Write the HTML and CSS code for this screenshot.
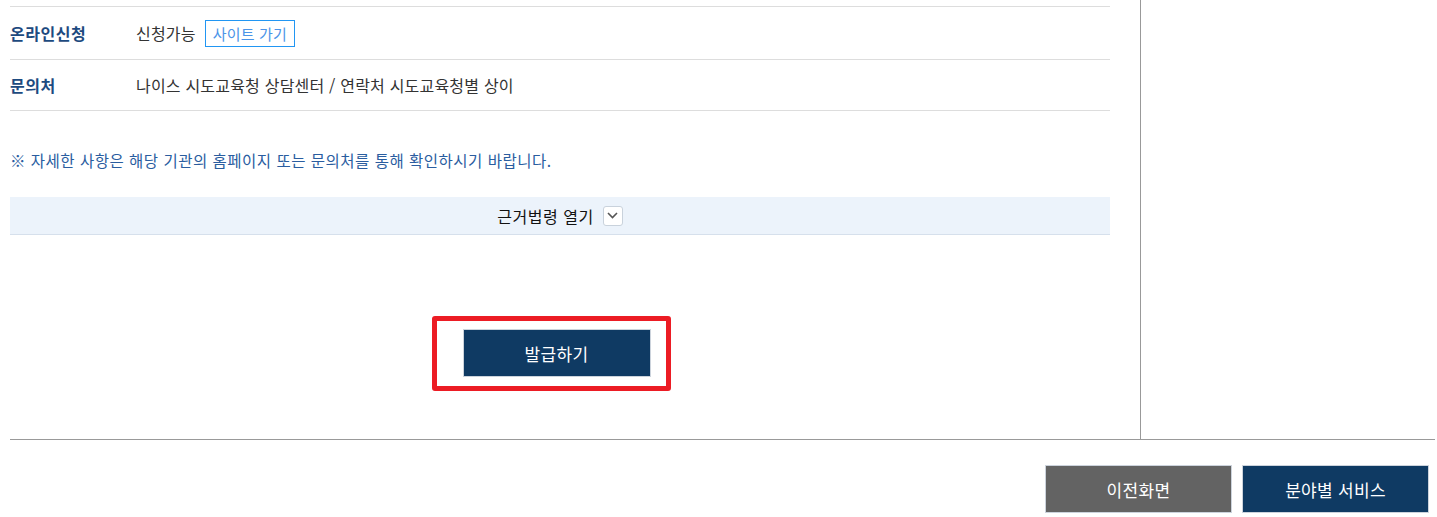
FILE: index.html
```html
<!DOCTYPE html>
<html lang="ko">
<head>
    <meta charset="UTF-8">
    <meta name="viewport" content="width=device-width, initial-scale=1.0">
    <title>발급하기</title>
    <link rel="stylesheet" href="styles.css">
</head>
<body>
    <div class="page">
        <div class="content-wrap">
            <div class="main">
                <div class="info-table">
                    <div class="info-row row-tall">
                        <div class="info-label">온라인신청</div>
                        <div class="info-value">
                            신청가능
                            <a class="site-link" href="#">사이트 가기</a>
                        </div>
                    </div>
                    <div class="info-row">
                        <div class="info-label">문의처</div>
                        <div class="info-value">나이스 시도교육청 상담센터 / 연락처 시도교육청별 상이</div>
                    </div>
                </div>

                <p class="notice">※ 자세한 사항은 해당 기관의 홈페이지 또는 문의처를 통해 확인하시기 바랍니다.</p>

                <div class="law-bar">
                    <span>근거법령 열기</span>
                    <button class="law-toggle" type="button">
                        <svg width="11" height="7" viewBox="0 0 11 7"><path d="M1 1l4.5 4.5L10 1" fill="none" stroke="#555" stroke-width="1.6"/></svg>
                    </button>
                </div>

                <div class="issue-area">
                    <div class="issue-wrap">
                        <button class="btn btn-navy btn-issue" type="button">발급하기</button>
                        <span class="highlight"></span>
                    </div>
                </div>
            </div>
            <div class="aside"></div>
        </div>

        <div class="bottom-bar">
            <button class="btn btn-gray" type="button">이전화면</button>
            <button class="btn btn-navy" type="button">분야별 서비스</button>
        </div>
    </div>
</body>
</html>
```

FILE: styles.css
```css
body {
    margin: 0;
    font-family: "Noto Sans CJK KR", "Noto Sans", sans-serif;
    font-size: 16px;
    letter-spacing: 0.5px;
    color: #222;
    background: #fff;
}

.page {
    padding-left: 10px;
    padding-right: 2px;
}

.content-wrap {
    display: flex;
    border-bottom: 1px solid #999;
    height: 439px;
}

.main {
    width: 1100px;
    padding-top: 6px;
}

.aside {
    margin-left: 30px;
    border-left: 1px solid #999;
    flex: 1;
}

.info-row {
    display: flex;
    align-items: center;
    height: 50px;
    border-top: 1px solid #ddd;
    line-height: 22px;
}

.info-row.row-tall {
    height: 52px;
}

.info-row:last-child {
    border-bottom: 1px solid #ddd;
}

.info-label {
    width: 126px;
    font-weight: bold;
    color: #1d4a80;
}

.info-value {
    display: flex;
    align-items: center;
    letter-spacing: 0.2px;
    color: #333;
}

.site-link {
    display: inline-block;
    margin-left: 9px;
    padding: 0 7px;
    height: 25px;
    line-height: 25px;
    font-size: 15px;
    border: 1px solid #2196f3;
    color: #4b94e8;
    text-decoration: none;
}

.notice {
    margin: 38px 0 0;
    line-height: 22px;
    font-size: 15.5px;
    color: #2a5d9f;
}

.law-bar {
    display: flex;
    align-items: center;
    justify-content: center;
    margin-top: 26px;
    height: 37px;
    background: #ecf3fb;
    border-bottom: 1px solid #d6e0ec;
    color: #111;
}

.law-toggle {
    display: flex;
    align-items: center;
    justify-content: center;
    margin-left: 9px;
    width: 20px;
    height: 20px;
    padding: 0;
    background: #fff;
    border: 1px solid #c9d2dc;
    border-radius: 3px;
}

.issue-area {
    display: flex;
    justify-content: center;
    padding-right: 7px;
    margin-top: 94px;
}

.issue-wrap {
    position: relative;
}

.highlight {
    position: absolute;
    top: -13px;
    left: -31px;
    right: -20px;
    bottom: -14px;
    border: 5px solid #ec1c24;
    border-radius: 3px;
}

.btn {
    width: 187px;
    height: 48px;
    border: 1px solid #ccd3dc;
    color: #fff;
    font-family: inherit;
    font-size: 17px;
    letter-spacing: 0.3px;
    cursor: pointer;
}

.btn-issue {
    width: 188px;
}

.btn-navy {
    background: #0f3a63;
}

.btn-gray {
    background: #636363;
}

.bottom-bar {
    display: flex;
    justify-content: flex-end;
    gap: 10px;
    padding-top: 25px;
    padding-right: 6px;
}
```
